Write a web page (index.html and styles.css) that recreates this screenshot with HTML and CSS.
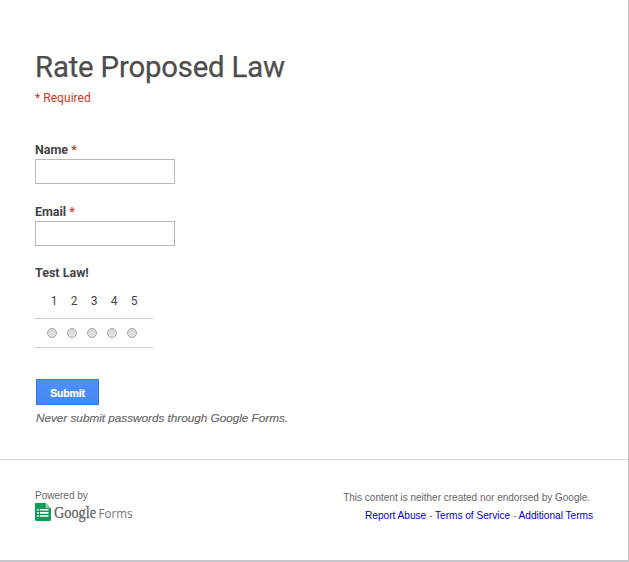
FILE: index.html
```html
<!DOCTYPE html>
<html lang="en">
<head>
<meta charset="utf-8">
<title>Rate Proposed Law</title>
<link rel="stylesheet" href="styles.css">
</head>
<body>
<div class="page">
  <main class="form">
    <h1 class="title">Rate Proposed Law</h1>
    <p class="required">* Required</p>
    <div class="field">
      <label class="label" for="name">Name <span class="star">*</span></label>
      <input class="input" id="name" type="text">
    </div>
    <div class="field">
      <label class="label" for="email">Email <span class="star">*</span></label>
      <input class="input" id="email" type="text">
    </div>
    <div class="scale">
      <div class="label">Test Law!</div>
      <div class="numbers"><span>1</span><span>2</span><span>3</span><span>4</span><span>5</span></div>
      <div class="radios">
        <span><input class="radio" type="radio" name="s"></span>
        <span><input class="radio" type="radio" name="s"></span>
        <span><input class="radio" type="radio" name="s"></span>
        <span><input class="radio" type="radio" name="s"></span>
        <span><input class="radio" type="radio" name="s"></span>
      </div>
    </div>
    <button class="submit" type="button">Submit</button>
    <p class="warning">Never submit passwords through Google Forms.</p>
  </main>
  <footer class="footer">
    <div class="powered">
      <div class="powered-text">Powered by</div>
      <div class="logo">
        <svg class="logo-icon" width="16" height="18" viewBox="0 0 16 18">
          <path fill="#0f9d58" d="M1.200 0H10.500L16 5.200V16.800Q16 18 14.800 18H1.200Q0 18 0 16.800V1.200Q0 0 1.200 0Z"/>
          <path fill="#87ceac" d="M10.500 0L16 5.200H11.500Q10.500 5.200 10.500 4.200Z"/>
          <path fill="#fff" d="M2.200 6h1.700v1.600H2.200zM5 6h8.500v1.600H5zM2.200 9.100h1.700v1.600H2.200zM5 9.100h8.500v1.600H5zM2.200 12.200h1.700v1.600H2.200zM5 12.200h8.500v1.600H5z"/>
        </svg>
        <svg class="wordmark" width="82" height="22" viewBox="0 0 82 22">
          <text class="google" x="3" y="15" textLength="42" lengthAdjust="spacingAndGlyphs">Google</text>
          <text class="forms" x="47.500" y="14.500" textLength="34" lengthAdjust="spacingAndGlyphs">Forms</text>
        </svg>
      </div>
    </div>
    <div class="legal">
      <div class="disclaimer">This content is neither created nor endorsed by Google.</div>
      <div class="links"><a href="#">Report Abuse</a> - <a href="#">Terms of Service</a> - <a href="#">Additional Terms</a></div>
    </div>
  </footer>
</div>
</body>
</html>
```
FILE: styles.css
```css
* { box-sizing: border-box; }
body { margin: 0; background: #fff; font-family: Roboto, sans-serif; color: #444; }
.page { width: 629px; height: 562px; border-right: 1px solid #c8c8c8; border-bottom: 2px solid #c6c7c9; overflow: hidden; }
.form { height: 460px; padding: 48px 35px 0; border-bottom: 1px solid #d9d9d9; }
.title { margin: 0; font-size: 29.3px; line-height: 38px; font-weight: 400; letter-spacing: -0.16px; color: #4d4d4d; white-space: nowrap; -webkit-text-stroke: 0.25px #4d4d4d; }
.required { margin: 4px 0 36px; font-size: 12px; line-height: 16px; letter-spacing: 0.05px; color: #c43b1d; }
.field { height: 61.500px; display: flex; flex-direction: column; }
.label { font-size: 12.500px; line-height: 17px; font-weight: 700; color: #444; margin-top: -1px; }
.star { color: #c43b1d; font-weight: 500; }
.input { width: 140px; height: 25px; margin: 1px 0 0; border: 1px solid #b9b9b9; background: #fff; }
.scale { width: 118px; }
.numbers, .radios { display: grid; grid-template-columns: repeat(5, 20px); }
.numbers { padding-left: 9px; height: 37px; padding-top: 12px; font-size: 12px; line-height: 16px; text-align: center; }
.radios { height: 30px; padding-left: 7px; border: solid #ccc; border-width: 1px 0; align-items: center; justify-items: center; }
.radios span { display: flex; }
.radio { appearance: none; width: 10px; height: 10px; margin: 0; border: 1px solid #a5a5a5; border-radius: 50%; background: linear-gradient(#d5d5d5, #e5e5e5); }
.submit { display: block; width: 63px; height: 26px; margin: 31px 0 0 1px; padding: 1px 0 0; border: 1px solid #3079ed; background: linear-gradient(#4d90fe, #4787ed); color: #fff; font: bold 10.500px "Liberation Sans", sans-serif; letter-spacing: -0.2px; -webkit-text-stroke: 0.2px #fff; }
.warning { margin: 5px 0 0 1px; font: italic 11.720px/16px "Liberation Sans", sans-serif; color: #666; white-space: nowrap; -webkit-text-stroke: 0.15px #666; }
.footer { display: flex; justify-content: space-between; padding: 28px 35px 0; font: 10px/15px "Liberation Sans", sans-serif; color: #666; }
.logo { display: flex; align-items: flex-start; }
.wordmark { overflow: visible; }
.google { font: 16px "Liberation Serif", serif; fill: #666; stroke: #666; stroke-width: .3px; }
.forms { font: 12px "Open Sans", sans-serif; fill: #737373; }
.legal { padding-top: 2px; white-space: nowrap; text-align: right; }
.disclaimer { padding-right: 3px; }
.links { margin-top: 3px; font-size: 10.100px; }
.links a { color: #00d; text-decoration: none; }
```
